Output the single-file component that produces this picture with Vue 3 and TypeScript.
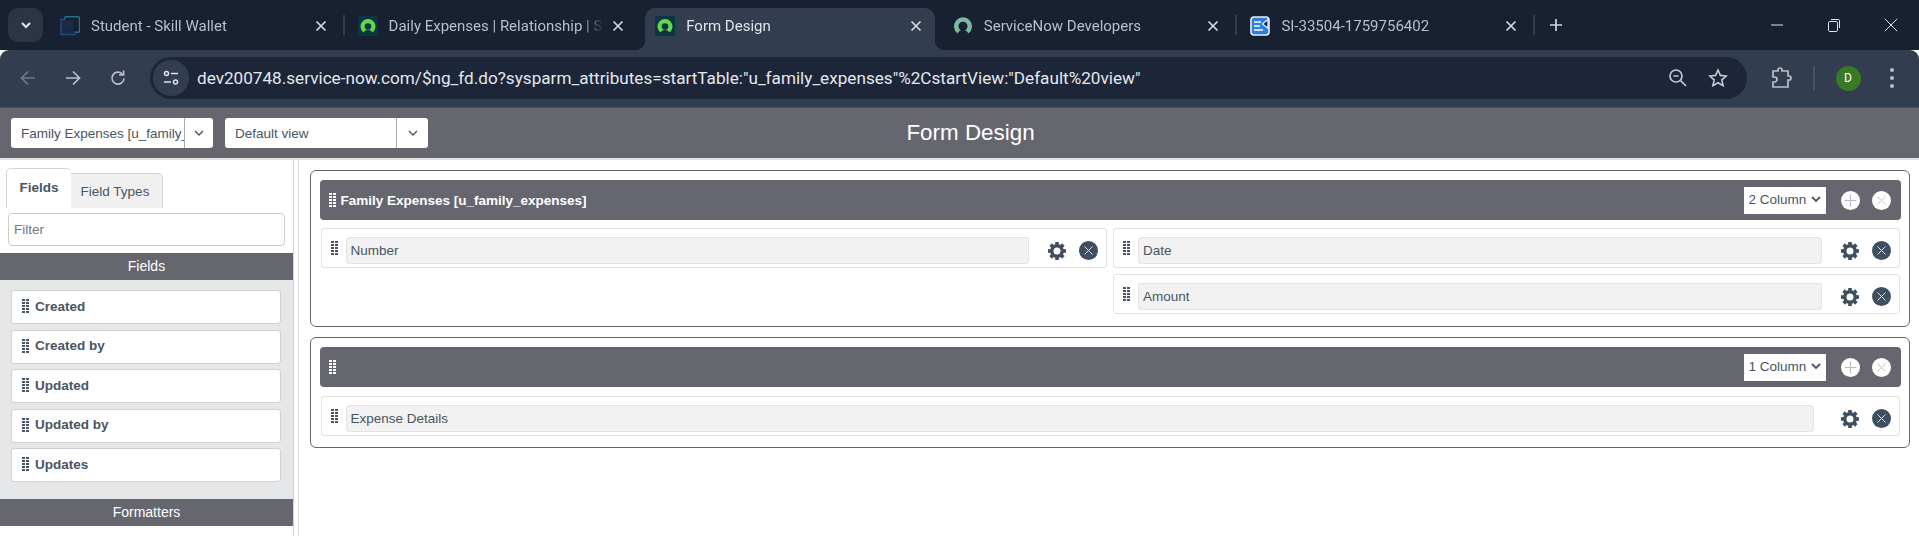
<script setup lang="ts">
const browserTabs = [
  { title: 'Student - Skill Wallet', icon: 'wallet', active: false, sep: true },
  { title: 'Daily Expenses | Relationship | ServiceNow', icon: 'now', active: false, sep: false },
  { title: 'Form Design', icon: 'now', active: true, sep: false },
  { title: 'ServiceNow Developers', icon: 'dev', active: false, sep: true },
  { title: 'SI-33504-1759756402', icon: 'doc', active: false, sep: true },
]

const url = 'dev200748.service-now.com/$ng_fd.do?sysparm_attributes=startTable:"u_family_expenses"%2CstartView:"Default%20view"'

const availableFields = ['Created', 'Created by', 'Updated', 'Updated by', 'Updates']

const gripRows = [0, 3, 6, 9, 12]
const gearTeeth = [0, 45, 90, 135, 180, 225, 270, 315]
</script>

<template>
  <div class="window">
    <div class="tabstrip">
      <button class="tab-search">
        <svg width="14" height="14" viewBox="0 0 14 14"><path d="M3 5l4 4 4-4" fill="none" stroke="#e4e8ee" stroke-width="2" /></svg>
      </button>
      <div
        v-for="tab in browserTabs"
        :key="tab.title"
        class="tab"
        :class="{ 'tab-active': tab.active, 'tab-sep': tab.sep }"
      >
        <svg v-if="tab.icon === 'wallet'" class="favicon" viewBox="0 0 20 20">
          <rect x="4.5" y="0.8" width="15" height="15.5" rx="1.5" fill="none" stroke="#2a6f86" stroke-width="1.4" />
          <path d="M4 3.5H1v15h14v-2.5" fill="#1a2a44" stroke="#234a86" stroke-width="1.4" />
          <rect x="5" y="5" width="8" height="8" fill="#1b2c44" />
        </svg>
        <svg v-else-if="tab.icon === 'now'" class="favicon" viewBox="0 0 20 20">
          <rect width="20" height="20" rx="2" fill="#0b3540" />
          <path d="M5.5 16.5A7.5 7.5 0 1 1 14.5 16.5A5 5 0 0 0 5.5 16.5Z" fill="#62d84e" />
          <circle cx="10" cy="10.5" r="3.3" fill="#0b3540" />
        </svg>
        <svg v-else-if="tab.icon === 'dev'" class="favicon" viewBox="0 0 20 20">
          <path d="M4.6 17.5A9 9 0 1 1 15.4 17.5A6 6 0 0 0 4.6 17.5Z" fill="#7db9a1" />
          <circle cx="10" cy="10.3" r="4.5" fill="#182132" />
        </svg>
        <svg v-else class="favicon" viewBox="0 0 20 20">
          <rect x="1" y="1" width="18" height="18" rx="3" fill="#2b7fe0" stroke="#e8f1fb" stroke-width="1.6" />
          <path d="M4 6h7M4 10h6M4 14h9" stroke="#fff" stroke-width="1.7" />
          <path d="M18 3.5L12.5 8l5.5 4z" fill="#182132" stroke="#e8f1fb" stroke-width="1.2" />
        </svg>
        <span class="tab-title">{{ tab.title }}</span>
        <svg class="tab-close" width="12" height="12" viewBox="0 0 12 12">
          <path d="M1.5 1.5l9 9M10.5 1.5l-9 9" stroke="currentColor" stroke-width="1.7" />
        </svg>
      </div>
      <div class="new-tab">
        <svg width="14" height="14" viewBox="0 0 14 14"><path d="M7 1v12M1 7h12" stroke="#cfd5de" stroke-width="1.7" /></svg>
      </div>
      <div class="window-controls">
        <div class="win-btn"><svg width="14" height="14" viewBox="0 0 14 14"><path d="M1 7h12" stroke="#dfe3ea" stroke-width="1" /></svg></div>
        <div class="win-btn">
          <svg width="14" height="14" viewBox="0 0 14 14" fill="none" stroke="#dfe3ea">
            <rect x="1.5" y="3.5" width="9" height="10" rx="1.2" />
            <path d="M4 1.5h7.5a1 1 0 0 1 1 1V10" />
          </svg>
        </div>
        <div class="win-btn"><svg width="14" height="14" viewBox="0 0 14 14"><path d="M0.8 0.8l12.4 12.4M13.2 0.8L0.8 13.2" stroke="#dfe3ea" stroke-width="1" /></svg></div>
      </div>
    </div>

    <div class="toolbar">
      <div class="nav-btn">
        <svg width="18" height="18" viewBox="0 0 18 18" fill="none" stroke="#6f7888" stroke-width="1.7"><path d="M16 9H2.5M9 2.5L2.5 9 9 15.5" /></svg>
      </div>
      <div class="nav-btn">
        <svg width="18" height="18" viewBox="0 0 18 18" fill="none" stroke="#b9c0cc" stroke-width="1.7"><path d="M2 9h13.5M9 2.5L15.5 9 9 15.5" /></svg>
      </div>
      <div class="nav-btn nav-last">
        <svg width="18" height="18" viewBox="0 0 18 18" fill="none" stroke="#b9c0cc" stroke-width="1.7">
          <path d="M15 9.5A6 6 0 1 1 13.2 4.8" />
          <path d="M14.6 1.5v4.4h-4.4" />
        </svg>
      </div>
      <div class="omnibox">
        <div class="site-chip">
          <svg width="18" height="18" viewBox="0 0 18 18" fill="none" stroke="#dfe3ea" stroke-width="1.5">
            <circle cx="4.5" cy="4.5" r="2" />
            <path d="M9 4.5h7M2 13h7" />
            <circle cx="13.5" cy="13" r="2" />
          </svg>
        </div>
        <span class="url">{{ url }}</span>
        <div class="omni-icon">
          <svg width="20" height="20" viewBox="0 0 20 20" fill="none" stroke="#c3c9d4" stroke-width="1.7">
            <circle cx="8" cy="8" r="6" />
            <path d="M5.5 8h5M12.5 12.5L18 18" />
          </svg>
        </div>
        <div class="omni-icon">
          <svg width="20" height="20" viewBox="0 0 20 20" fill="none" stroke="#c3c9d4" stroke-width="1.6">
            <path d="M10 2l2.4 5.4 5.8.6-4.4 3.9 1.3 5.8L10 14.7l-5.1 3 1.3-5.8L1.8 8l5.8-.6z" />
          </svg>
        </div>
      </div>
      <div class="ext-btn">
        <svg width="20" height="22" viewBox="0 0 20 22" fill="none" stroke="#b9c0cc" stroke-width="1.7">
          <path d="M1 4h5V3a2 2 0 0 1 4 0v1h6v5h1a2 2 0 0 1 0 4h-1v7H1v-5h1.5a2.5 2.5 0 0 0 0-5H1z" />
        </svg>
      </div>
      <div class="toolbar-sep"></div>
      <div class="avatar-cell"><span class="avatar">D</span></div>
      <div class="menu-cell">
        <svg width="6" height="22" viewBox="0 0 6 22" fill="#b9c0cc">
          <circle cx="3" cy="3" r="2" /><circle cx="3" cy="11" r="2" /><circle cx="3" cy="19" r="2" />
        </svg>
      </div>
    </div>

    <header class="page-header">
      <div class="picker-row">
        <div class="picker picker-table">
          <span class="picker-value">Family Expenses [u_family_expenses]</span>
          <span class="picker-arrow"><svg width="10" height="7" viewBox="0 0 10 7"><path d="M1 1l4 4 4-4" fill="none" stroke="#485563" stroke-width="1.4" /></svg></span>
        </div>
        <div class="picker picker-view">
          <span class="picker-value">Default view</span>
          <span class="picker-arrow"><svg width="10" height="7" viewBox="0 0 10 7"><path d="M1 1l4 4 4-4" fill="none" stroke="#485563" stroke-width="1.4" /></svg></span>
        </div>
      </div>
      <h1 class="page-title">Form Design</h1>
    </header>

    <div class="workspace">
      <aside class="sidebar">
        <div class="side-tabs">
          <div class="side-tab side-tab-active">Fields</div>
          <div class="side-tab">Field Types</div>
        </div>
        <div class="filter-wrap">
          <input class="filter" type="text" placeholder="Filter" />
        </div>
        <div class="side-heading">Fields</div>
        <ul class="field-list">
          <li v-for="name in availableFields" :key="name" class="field-item">
            <svg class="grip" width="7" height="14" viewBox="0 0 7 14" fill="#485563">
              <template v-for="y in gripRows" :key="y">
                <rect x="0" :y="y" width="3" height="2" /><rect x="4" :y="y" width="3" height="2" />
              </template>
            </svg>
            {{ name }}
          </li>
        </ul>
        <div class="side-heading">Formatters</div>
      </aside>

      <main class="canvas">
        <section class="form-section">
          <div class="section-head">
            <svg class="grip" width="7" height="14" viewBox="0 0 7 14" fill="#fff">
              <template v-for="y in gripRows" :key="y">
                <rect x="0" :y="y" width="3" height="2" /><rect x="4" :y="y" width="3" height="2" />
              </template>
            </svg>
            <span class="section-title">Family Expenses [u_family_expenses]</span>
            <div class="col-select"><span>2 Column</span><svg width="10" height="7" viewBox="0 0 10 7"><path d="M1 1l4 4 4-4" fill="none" stroke="#485563" stroke-width="1.8" /></svg></div>
            <svg class="head-btn" width="19" height="19" viewBox="0 0 19 19">
              <circle cx="9.5" cy="9.5" r="9.5" fill="#fff" />
              <path d="M9.5 3.5v12M3.5 9.5h12" stroke="#c0b6c4" stroke-width="1" />
            </svg>
            <svg class="head-btn head-btn-last" width="19" height="19" viewBox="0 0 19 19">
              <circle cx="9.5" cy="9.5" r="9.5" fill="#fff" />
              <path d="M5.5 5.5l8 8M13.5 5.5l-8 8" stroke="#c2c6cb" stroke-width="1" />
            </svg>
          </div>
          <div class="columns">
            <div class="column">
              <div class="field-row">
                <svg class="grip" width="7" height="14" viewBox="0 0 7 14" fill="#485563">
                  <template v-for="y in gripRows" :key="y">
                    <rect x="0" :y="y" width="3" height="2" /><rect x="4" :y="y" width="3" height="2" />
                  </template>
                </svg>
                <div class="field-label">Number</div>
                <div class="row-actions">
                  <svg class="gear" width="18" height="18" viewBox="-9 -9 18 18">
                    <circle r="5.2" fill="none" stroke="#3f4f60" stroke-width="3.4" />
                    <rect v-for="deg in gearTeeth" :key="deg" x="-1.8" y="-9" width="3.6" height="3" fill="#3f4f60" :transform="`rotate(${deg})`" />
                  </svg>
                  <svg width="19" height="19" viewBox="0 0 19 19">
                    <circle cx="9.5" cy="9.5" r="9.5" fill="#3f4f60" />
                    <path d="M5.5 5.5l8 8M13.5 5.5l-8 8" stroke="#dfe3e8" stroke-width="1" />
                  </svg>
                </div>
              </div>
            </div>
            <div class="column">
              <div v-for="name in ['Date', 'Amount']" :key="name" class="field-row">
                <svg class="grip" width="7" height="14" viewBox="0 0 7 14" fill="#485563">
                  <template v-for="y in gripRows" :key="y">
                    <rect x="0" :y="y" width="3" height="2" /><rect x="4" :y="y" width="3" height="2" />
                  </template>
                </svg>
                <div class="field-label">{{ name }}</div>
                <div class="row-actions">
                  <svg class="gear" width="18" height="18" viewBox="-9 -9 18 18">
                    <circle r="5.2" fill="none" stroke="#3f4f60" stroke-width="3.4" />
                    <rect v-for="deg in gearTeeth" :key="deg" x="-1.8" y="-9" width="3.6" height="3" fill="#3f4f60" :transform="`rotate(${deg})`" />
                  </svg>
                  <svg width="19" height="19" viewBox="0 0 19 19">
                    <circle cx="9.5" cy="9.5" r="9.5" fill="#3f4f60" />
                    <path d="M5.5 5.5l8 8M13.5 5.5l-8 8" stroke="#dfe3e8" stroke-width="1" />
                  </svg>
                </div>
              </div>
            </div>
          </div>
        </section>

        <section class="form-section">
          <div class="section-head">
            <svg class="grip" width="7" height="14" viewBox="0 0 7 14" fill="#fff">
              <template v-for="y in gripRows" :key="y">
                <rect x="0" :y="y" width="3" height="2" /><rect x="4" :y="y" width="3" height="2" />
              </template>
            </svg>
            <span class="section-title"></span>
            <div class="col-select"><span>1 Column</span><svg width="10" height="7" viewBox="0 0 10 7"><path d="M1 1l4 4 4-4" fill="none" stroke="#485563" stroke-width="1.8" /></svg></div>
            <svg class="head-btn" width="19" height="19" viewBox="0 0 19 19">
              <circle cx="9.5" cy="9.5" r="9.5" fill="#fff" />
              <path d="M9.5 3.5v12M3.5 9.5h12" stroke="#c0b6c4" stroke-width="1" />
            </svg>
            <svg class="head-btn head-btn-last" width="19" height="19" viewBox="0 0 19 19">
              <circle cx="9.5" cy="9.5" r="9.5" fill="#fff" />
              <path d="M5.5 5.5l8 8M13.5 5.5l-8 8" stroke="#c2c6cb" stroke-width="1" />
            </svg>
          </div>
          <div class="columns columns-single">
            <div class="column">
              <div class="field-row field-row-wide">
                <svg class="grip" width="7" height="14" viewBox="0 0 7 14" fill="#485563">
                  <template v-for="y in gripRows" :key="y">
                    <rect x="0" :y="y" width="3" height="2" /><rect x="4" :y="y" width="3" height="2" />
                  </template>
                </svg>
                <div class="field-label">Expense Details</div>
                <div class="row-actions">
                  <svg class="gear" width="18" height="18" viewBox="-9 -9 18 18">
                    <circle r="5.2" fill="none" stroke="#3f4f60" stroke-width="3.4" />
                    <rect v-for="deg in gearTeeth" :key="deg" x="-1.8" y="-9" width="3.6" height="3" fill="#3f4f60" :transform="`rotate(${deg})`" />
                  </svg>
                  <svg width="19" height="19" viewBox="0 0 19 19">
                    <circle cx="9.5" cy="9.5" r="9.5" fill="#3f4f60" />
                    <path d="M5.5 5.5l8 8M13.5 5.5l-8 8" stroke="#dfe3e8" stroke-width="1" />
                  </svg>
                </div>
              </div>
            </div>
          </div>
        </section>
      </main>
    </div>
  </div>
</template>

<style>
html, body {
  margin: 0;
  background: #fff;
  overflow: hidden;
}
</style>

<style scoped>
.window {
  width: 1919px;
  height: 536px;
  overflow: hidden;
  display: flex;
  flex-direction: column;
  font-family: "Liberation Sans", Arial, sans-serif;
  color: #485563;
}

/* browser chrome */
.tabstrip {
  height: 50px;
  flex: none;
  display: flex;
  align-items: flex-end;
  background: #182132;
  padding-left: 8px;
  box-sizing: border-box;
}

.tab-search {
  width: 35px;
  height: 34px;
  align-self: flex-start;
  margin: 8px 5px 0 0;
  padding: 0;
  border: none;
  border-radius: 10px;
  background: #2c3546;
  display: flex;
  align-items: center;
  justify-content: center;
}

.tab {
  width: 297.6px;
  height: 42px;
  flex: none;
  box-sizing: border-box;
  display: flex;
  align-items: center;
  padding: 0 19px 7px 12px;
  position: relative;
  font-family: Roboto, "Open Sans", sans-serif;
  font-size: 15px;
  color: #b8bfca;
}

.tab-sep::after {
  content: "";
  position: absolute;
  right: 1px;
  top: 7px;
  height: 20px;
  width: 2px;
  background: #333d50;
}

.tab-active {
  background: #333d50;
  color: #dfe3ea;
  border-radius: 10px 10px 0 0;
  margin: 0 6px 0 2px;
  width: 289.6px;
  padding: 0 13px 7px 10px;
}

.tab-active::before,
.tab-active::after {
  content: "";
  position: absolute;
  bottom: 0;
  width: 10px;
  height: 10px;
}

.tab-active::before {
  left: -10px;
  background: radial-gradient(circle at 0 0, transparent 10px, #333d50 10.5px);
}

.tab-active::after {
  right: -10px;
  background: radial-gradient(circle at 100% 0, transparent 10px, #333d50 10.5px);
}

.favicon {
  width: 20px;
  height: 20px;
  flex: none;
}

.tab-title {
  flex: 1;
  min-width: 0;
  margin-left: 11px;
  white-space: nowrap;
  overflow: hidden;
  -webkit-mask-image: linear-gradient(to right, #000 calc(100% - 30px), transparent calc(100% - 8px));
  mask-image: linear-gradient(to right, #000 calc(100% - 30px), transparent calc(100% - 8px));
}

.tab-close {
  flex: none;
  color: #d5dae2;
}

.new-tab {
  width: 40px;
  align-self: center;
  display: flex;
  justify-content: center;
}

.window-controls {
  margin-left: auto;
  display: flex;
  align-self: center;
}

.win-btn {
  width: 57px;
  display: flex;
  justify-content: center;
}

.toolbar {
  height: 58px;
  flex: none;
  box-sizing: border-box;
  display: flex;
  align-items: center;
  padding: 0 4px 1px 5px;
  background: #333d50;
  border-radius: 9px 9px 0 0;
  border-bottom: 1px solid #454d5e;
}

.nav-btn {
  width: 45px;
  display: flex;
  justify-content: center;
}

.nav-last {
  margin-right: 10px;
}

.omnibox {
  width: 1597px;
  height: 42px;
  flex: none;
  display: flex;
  align-items: center;
  padding: 0 9px 0 3px;
  box-sizing: border-box;
  background: #1c2638;
  border-radius: 21px;
}

.site-chip {
  width: 36px;
  height: 36px;
  flex: none;
  border-radius: 50%;
  background: #333d50;
  display: flex;
  align-items: center;
  justify-content: center;
}

.url {
  flex: 1;
  margin-left: 8px;
  font-family: Roboto, "Open Sans", sans-serif;
  font-size: 17.15px;
  color: #e4e7ed;
  white-space: nowrap;
}

.omni-icon {
  width: 40px;
  display: flex;
  justify-content: center;
}

.ext-btn {
  width: 40px;
  margin-left: 15px;
  display: flex;
  justify-content: center;
}

.toolbar-sep {
  width: 2px;
  height: 24px;
  margin-left: 11px;
  background: #4a5366;
}

.avatar-cell {
  width: 44px;
  margin-left: 11px;
  display: flex;
  justify-content: center;
}

.avatar {
  width: 25px;
  height: 25px;
  border-radius: 50%;
  background: #3a7a24;
  color: #fff;
  font-family: Roboto, sans-serif;
  font-size: 12px;
  display: flex;
  align-items: center;
  justify-content: center;
}

.menu-cell {
  width: 44px;
  display: flex;
  justify-content: center;
}

/* form design header */
.page-header {
  height: 52px;
  flex: none;
  box-sizing: border-box;
  display: grid;
  align-items: center;
  background: #66666f;
  border-bottom: 2px solid #e1e2e3;
}

.picker-row,
.page-title {
  grid-area: 1 / 1;
}

.picker-row {
  display: flex;
  gap: 12px;
  padding-left: 11px;
}

.page-title {
  justify-self: center;
  margin: 0;
  padding-left: 22px;
  font-size: 22.4px;
  font-weight: 400;
  color: #fff;
}

.picker {
  height: 30px;
  box-sizing: border-box;
  display: flex;
  background: #fff;
  border-radius: 3px;
  font-size: 13.5px;
  line-height: 31px;
}

.picker-table {
  width: 202px;
}

.picker-view {
  width: 203px;
}

.picker-value {
  flex: 1;
  min-width: 0;
  padding-left: 10px;
  overflow: hidden;
  white-space: nowrap;
}

.picker-arrow {
  width: 28px;
  flex: none;
  border-left: 1px solid #aaa;
  display: flex;
  align-items: center;
  justify-content: center;
}

.picker-view .picker-arrow {
  width: 31px;
}

/* main area */
.workspace {
  flex: 1;
  min-height: 0;
  display: flex;
}

.sidebar {
  width: 294px;
  flex: none;
  box-sizing: border-box;
  border-right: 1px solid #d0d2d4;
  font-size: 13.5px;
}

.side-tabs {
  height: 48px;
  box-sizing: border-box;
  display: flex;
  align-items: flex-end;
  padding-left: 6px;
}

.side-tab {
  height: 35px;
  width: 96px;
  margin-left: -4px;
  box-sizing: border-box;
  border: 1px solid #d5d5d5;
  border-bottom: none;
  border-radius: 5px 5px 0 0;
  background: #f0f0f0;
  line-height: 35px;
  text-align: center;
}

.side-tab-active {
  height: 40px;
  width: 65px;
  margin-left: 0;
  position: relative;
  z-index: 1;
  border-right: none;
  background: #fff;
  font-weight: 700;
  line-height: 38px;
}

.filter-wrap {
  padding: 5px 8px 7px;
}

.filter {
  display: block;
  width: 277px;
  height: 33px;
  box-sizing: border-box;
  padding: 0 5px;
  border: 1px solid #ccc;
  border-radius: 4px;
  outline: none;
  font: 13.5px "Liberation Sans", Arial, sans-serif;
}

.filter::placeholder {
  color: #777;
  opacity: 1;
}

.side-heading {
  height: 27px;
  line-height: 27px;
  background: #66666f;
  color: #fff;
  text-align: center;
  font-size: 14px;
}

.field-list {
  margin: 0;
  padding: 10px 12px 17px 11px;
  height: 219px;
  box-sizing: border-box;
  list-style: none;
  background: #e6e7e8;
  display: flex;
  flex-direction: column;
  gap: 5.5px;
}

.field-item {
  height: 34px;
  flex: none;
  box-sizing: border-box;
  display: flex;
  align-items: center;
  gap: 6px;
  padding: 0 0 2px 10px;
  background: #fff;
  border: 1px solid #cfd1d3;
  border-radius: 3px;
  font-weight: 700;
}

.canvas {
  flex: 1;
  min-width: 0;
  margin-left: 4px;
  padding: 10px 9px 0 11px;
  border-left: 1px solid #dcdcdc;
  display: flex;
  flex-direction: column;
  gap: 10px;
}

.form-section {
  border: 1px solid #66666f;
  border-radius: 6px;
  padding: 9px 8.5px 12px;
}

.section-head {
  height: 40px;
  display: flex;
  align-items: center;
  padding: 0 9.5px 0 9px;
  background: #66666f;
  border-radius: 4px;
}

.section-title {
  flex: 1;
  margin-left: 5px;
  color: #fff;
  font-size: 13.5px;
  font-weight: 700;
}

.col-select {
  width: 82px;
  height: 27px;
  box-sizing: border-box;
  display: flex;
  align-items: center;
  justify-content: space-between;
  padding: 0 5px 2px;
  background: #fff;
  font-size: 13.5px;
}

.head-btn {
  margin-left: 15.5px;
}

.head-btn-last {
  margin-left: 12px;
}

.columns {
  display: grid;
  grid-template-columns: 1fr 1fr;
  gap: 6px;
  margin: 8px 1px 0;
}

.columns-single {
  grid-template-columns: 1fr;
  margin: 9px 1px -1px;
}

.column {
  display: flex;
  flex-direction: column;
  gap: 6px;
}

.field-row {
  height: 40px;
  box-sizing: border-box;
  display: flex;
  align-items: flex-start;
  padding: 8px 0 0 9px;
  border: 1px solid #e2e2e2;
  border-radius: 3px;
  font-size: 13.5px;
}

.field-row > .grip {
  margin-top: 4px;
}

.field-label {
  flex: 1;
  min-width: 0;
  height: 27px;
  margin-left: 8px;
  padding-left: 4px;
  box-sizing: border-box;
  line-height: 25px;
  background: #f2f2f2;
  border: 1px solid #e2e2e2;
  border-radius: 3px;
}

.row-actions {
  width: 77px;
  flex: none;
  height: 27px;
  box-sizing: border-box;
  display: flex;
  align-items: center;
  gap: 13px;
  padding-left: 19px;
}

.field-row-wide .row-actions {
  width: 85px;
  padding-left: 27px;
}
</style>
